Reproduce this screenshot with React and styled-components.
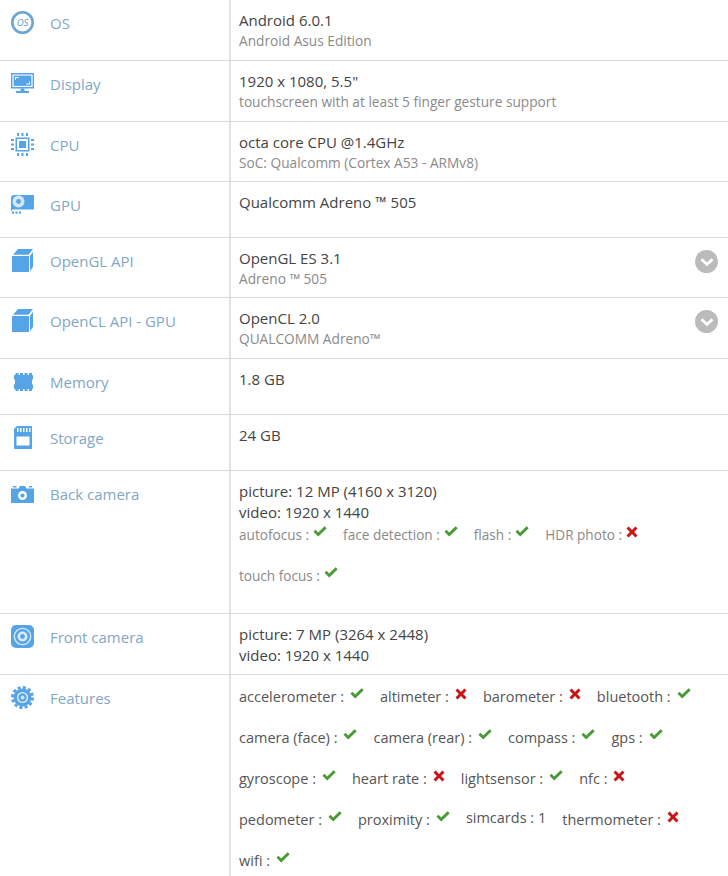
import React from "react"
import styled, { createGlobalStyle } from "styled-components"

const GlobalStyle = createGlobalStyle`
  html, body {
    margin: 0;
    padding: 0;
    background: #fff;
  }
  body {
    font-family: "Open Sans", "Noto Sans", "Liberation Sans", sans-serif;
    overflow: hidden;
  }
`

const OsIcon = () => (
  <svg viewBox="0 0 24 24" width="24" height="24">
    <circle cx="11.500" cy="11.500" r="10.200" fill="none" stroke="#6aa5d6" strokeWidth="2.600" />
    <text x="11.500" y="15" fontSize="9.500" fontStyle="italic" fill="#5c9bd0" textAnchor="middle" fontFamily="Open Sans, sans-serif">OS</text>
  </svg>
)

const DisplayIcon = () => (
  <svg viewBox="0 0 24 24" width="24" height="24" fill="#55a5e6">
    <path fillRule="evenodd" d="M0 1h23v15.500H0zM1.400 2.400v12.700h20.200V2.400z" />
    <rect x="2.600" y="3.600" width="17.800" height="10.300" />
    <path d="M4 8V5h3.800v.9H4.900V8zM19 9.500V12.500h-3.800v-.9h2.900V9.500z" fill="#fff" />
    <rect x="9.500" y="16.500" width="4" height="2.500" />
    <rect x="5" y="19" width="13" height="2" />
  </svg>
)

const CpuIcon = () => (
  <svg viewBox="0 0 24 24" width="24" height="24" fill="#55a5e6">
    <path fillRule="evenodd" d="M4.500 4.500h14v14h-14zM6 6v11h11V6z" />
    <rect x="8" y="8" width="7" height="7" />
    <path d="M6 0h2v3H6zM10.500 0h2v3h-2zM15 0h2v3h-2zM6 20h2v3H6zM10.500 20h2v3h-2zM15 20h2v3h-2zM0 6h3v2H0zM0 10.500h3v2H0zM0 15h3v2H0zM20 6h3v2h-3zM20 10.500h3v2h-3zM20 15h3v2h-3z" />
  </svg>
)

const GpuIcon = () => (
  <svg viewBox="0 0 24 24" width="24" height="24" fill="#55a5e6">
    <path d="M3 2h20v13c0 1-.6 1.500-1.500 1.500H1V18H0V5c0-1.700 1.300-3 3-3z" />
    <circle cx="7.500" cy="8.500" r="6" fill="#d5e7f7" />
    <circle cx="7.500" cy="8.500" r="2.400" fill="#55a5e6" />
    <path d="M1 18.500h2v2.200H1zM4.500 18.500h2v2.200h-2zM8 18.500h2v2.200H8z" />
  </svg>
)

const CubeIcon = () => (
  <svg viewBox="0 0 24 24" width="24" height="24" fill="#55a5e6">
    <path d="M1 7h17v16H1zM2 5.800 7 0h15l-4.500 5.800zM19 6.800 22 3v15l-3 4z" />
  </svg>
)

const MemoryIcon = () => (
  <svg viewBox="0 0 24 24" width="24" height="24" fill="#55a5e6">
    <path d="M3 6c0-.6.4-1 1-1h.5V3h3v2h1.500V3h3v2H13.500V3h3v2H18V3h3v2h.1c.5 0 .9.4.9 1v3.500h-1v5h1V18c0 .6-.4 1-1 1H21v2h-3v-2h-1.500v2h-3v-2H12v2H9v-2H7.500v2h-3v-2H4c-.6 0-1-.4-1-1v-3.500h1v-5H3z" />
  </svg>
)

const StorageIcon = () => (
  <svg viewBox="0 0 24 24" width="24" height="24" fill="#55a5e6">
    <path fillRule="evenodd" d="M6 0h14c.6 0 1 .4 1 1v21c0 .6-.4 1-1 1H4c-.6 0-1-.4-1-1V3zM6 2v4h1.500V2zM9 2v4h1.500V2zM12 2v4h1.500V2zM15 2v4h1.500V2zM18 2v4h1.500V2zM5.500 10.500v9h13v-9z" />
  </svg>
)

const CameraIcon = () => (
  <svg viewBox="0 0 24 24" width="24" height="24" fill="#55a5e6">
    <path fillRule="evenodd" d="M0 6.500h7.500L9 4h5l1.500 2.500H23V21H0zM11.500 9a4.500 4.500 0 1 0 0 9 4.500 4.500 0 0 0 0-9z" />
    <circle cx="11.500" cy="13.500" r="2" />
    <path d="M2 4h3.500v1.500H2zM18 4h3v1.500h-3z" />
  </svg>
)

const LensIcon = () => (
  <svg viewBox="0 0 24 24" width="24" height="24">
    <rect width="23" height="23" rx="5" fill="#55a5e6" />
    <circle cx="11.500" cy="11.500" r="8.200" fill="none" stroke="#dcebf8" strokeWidth="1.300" />
    <circle cx="11.500" cy="11.500" r="5" fill="#dcebf8" />
    <circle cx="11.500" cy="11.500" r="2.400" fill="#55a5e6" />
  </svg>
)

const GearIcon = () => (
  <svg viewBox="0 0 24 24" width="24" height="24">
    <circle cx="11.500" cy="11.500" r="10" fill="none" stroke="#55a5e6" strokeWidth="3" strokeDasharray="3 2.240" />
    <circle cx="11.500" cy="11.500" r="9" fill="#55a5e6" />
    <circle cx="11.500" cy="11.500" r="5.600" fill="#e4f0fa" />
    <circle cx="11.500" cy="11.500" r="4.200" fill="#55a5e6" />
    <circle cx="11.500" cy="11.500" r="2" fill="#cfe4f6" />
  </svg>
)

const CheckMark = () => (
  <svg viewBox="0 0 14 11" width="14" height="11">
    <path d="M0.500 5.800 2.500 3.800 5.200 6.400 11.600 0.300 13.700 2.300 5.200 10.500z" fill="#4a9a34" />
  </svg>
)

const CrossMark = () => (
  <svg viewBox="0 0 12 12" width="12" height="12">
    <path d="M2.600.5 6 3.900 9.400.5 11.500 2.600 8.100 6l3.400 3.400-2.100 2.100L6 8.100 2.600 11.500.5 9.400 3.900 6 .5 2.600z" fill="#cc1417" />
  </svg>
)

const rows = [
  { label: "OS", icon: <OsIcon />, height: 61, main: ["Android 6.0.1"], sub: ["Android Asus Edition"] },
  { label: "Display", icon: <DisplayIcon />, height: 61, main: ["1920 x 1080, 5.5\""], sub: ["touchscreen with at least 5 finger gesture support"] },
  { label: "CPU", icon: <CpuIcon />, height: 60, main: ["octa core CPU @1.4GHz"], sub: ["SoC: Qualcomm (Cortex A53 - ARMv8)"] },
  { label: "GPU", icon: <GpuIcon />, height: 56, main: ["Qualcomm Adreno ™ 505"] },
  { label: "OpenGL API", icon: <CubeIcon />, height: 60, main: ["OpenGL ES 3.1"], sub: ["Adreno ™ 505"], more: true },
  { label: "OpenCL API - GPU", icon: <CubeIcon />, height: 61, main: ["OpenCL 2.0"], sub: ["QUALCOMM Adreno™"], more: true },
  { label: "Memory", icon: <MemoryIcon />, height: 56, main: ["1.8 GB"] },
  { label: "Storage", icon: <StorageIcon />, height: 56, main: ["24 GB"] },
  {
    label: "Back camera",
    icon: <CameraIcon />,
    height: 143,
    main: ["picture: 12 MP (4160 x 3120)", "video: 1920 x 1440"],
    muted: true,
    chips: [
      [["autofocus", true], ["face detection", true], ["flash", true], ["HDR photo", false]],
      [["touch focus", true]],
    ],
  },
  { label: "Front camera", icon: <LensIcon />, height: 61, main: ["picture: 7 MP (3264 x 2448)", "video: 1920 x 1440"] },
  {
    label: "Features",
    icon: <GearIcon />,
    height: 202,
    main: [],
    chips: [
      [["accelerometer", true], ["altimeter", false], ["barometer", false], ["bluetooth", true]],
      [["camera (face)", true], ["camera (rear)", true], ["compass", true], ["gps", true]],
      [["gyroscope", true], ["heart rate", false], ["lightsensor", true], ["nfc", false]],
      [["pedometer", true], ["proximity", true], ["simcards", "1"], ["thermometer", false]],
      [["wifi", true]],
    ],
  },
]

function Chip({ name, value, muted }) {
  if (typeof value === "string") {
    return <ChipText $muted={muted} $raised>{name} : {value}</ChipText>
  }
  return (
    <ChipWrap $muted={muted}>
      <ChipText $muted={muted}>{name} :</ChipText>
      <Mark>{value ? <CheckMark /> : <CrossMark />}</Mark>
    </ChipWrap>
  )
}

export default function App() {
  return (
    <Table>
      <GlobalStyle />
      {rows.map(row => (
        <Row key={row.label} $height={row.height}>
          <LabelCell>
            <IconBox>{row.icon}</IconBox>
            <Label>{row.label}</Label>
          </LabelCell>
          <ValueCell>
            <Values>
              {row.main.map(line => <Main key={line}>{line}</Main>)}
              {row.sub && row.sub.map(line => <Sub key={line}>{line}</Sub>)}
              {row.chips && (
                <ChipLines>
                  {row.chips.map(line => (
                    <ChipLine key={line[0][0]}>
                      {line.map(([name, value]) => (
                        <Chip key={name} name={name} value={value} muted={row.muted} />
                      ))}
                    </ChipLine>
                  ))}
                </ChipLines>
              )}
            </Values>
            {row.more && (
              <MoreButton>
                <svg viewBox="0 0 14 10" width="14" height="10">
                  <path d="M1.500 2.200 7 7.400l5.500-5.200" fill="none" stroke="#fff" strokeWidth="2.800" />
                </svg>
              </MoreButton>
            )}
          </ValueCell>
        </Row>
      ))}
    </Table>
  )
}

const Table = styled.div`
  width: 728px;
  height: 876px;
  overflow: hidden;
  background: #fff;
`

const Row = styled.div`
  display: grid;
  grid-template-columns: 229px 1fr;
  box-sizing: border-box;
  height: ${props => props.$height}px;
  border-bottom: 1px solid #d9d9d9;
  &:last-child {
    border-bottom: none;
  }
`

const LabelCell = styled.div`
  display: flex;
  align-items: flex-start;
  gap: 16px;
  padding: 11px 0 0 11px;
`

const IconBox = styled.div`
  display: flex;
  width: 24px;
  height: 24px;
  flex-shrink: 0;
`

const Label = styled.div`
  font-size: 15px;
  line-height: 24px;
  margin-left: -1px;
  color: #7fa7c6;
`

const ValueCell = styled.div`
  display: flex;
  justify-content: space-between;
  align-items: flex-start;
  border-left: 2px solid #e3e3e3;
  padding: 10px 10px 0 8px;
`

const Values = styled.div`
  display: flex;
  flex-direction: column;
`

const Main = styled.div`
  font-size: 15px;
  line-height: 21px;
  color: #444;
`

const Sub = styled.div`
  font-size: 13.7px;
  line-height: 19px;
  color: #8a8a8a;
`

const ChipLines = styled.div`
  display: flex;
  flex-direction: column;
  gap: 21px;
  margin-top: 2px;
`

const ChipLine = styled.div`
  display: flex;
  gap: 16px;
  height: 20px;
`

const ChipWrap = styled.div`
  display: flex;
  align-items: flex-start;
  gap: ${props => (props.$muted ? "4px" : "6px")};
`

const ChipText = styled.span`
  font-size: ${props => (props.$muted ? "13.6px" : "14.5px")};
  line-height: 20px;
  color: ${props => (props.$muted ? "#8a8a8a" : "#555")};
  margin-top: ${props => (props.$raised ? "-2px" : "0")};
`

const Mark = styled.span`
  display: flex;
  margin-top: 1px;
`

const MoreButton = styled.div`
  display: flex;
  align-items: center;
  justify-content: center;
  width: 23px;
  height: 23px;
  border-radius: 50%;
  background: #bbb;
  margin-top: 2px;
`
